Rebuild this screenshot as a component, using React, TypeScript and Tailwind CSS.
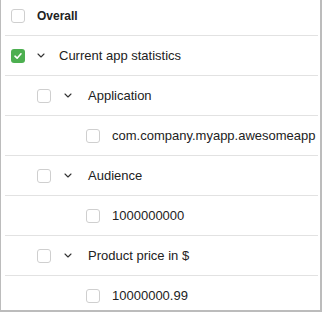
import React from "react";

type Row = { label: string; level: 0 | 1 | 2; checked?: boolean; expandable?: boolean; bold?: boolean };

const rows: Row[] = [
  { label: "Overall", level: 0, bold: true },
  { label: "Current app statistics", level: 0, checked: true, expandable: true },
  { label: "Application", level: 1, expandable: true },
  { label: "com.company.myapp.awesomeapp", level: 2 },
  { label: "Audience", level: 1, expandable: true },
  { label: "1000000000", level: 2 },
  { label: "Product price in $", level: 1, expandable: true },
  { label: "10000000.99", level: 2 },
];

function Checkbox({ checked }: { checked?: boolean }) {
  if (checked) {
    return (
      <span className="flex h-[14px] w-[14px] shrink-0 items-center justify-center rounded-[3px] bg-[#4caf50]">
        <svg width="10" height="10" viewBox="0 0 10 10" fill="none">
          <path d="M2 5.2 L4.1 7.2 L8 2.8" stroke="white" strokeWidth="1.6" strokeLinecap="round" strokeLinejoin="round" />
        </svg>
      </span>
    );
  }
  return <span className="block h-[14px] w-[14px] shrink-0 rounded-[3px] border border-[#cfcfcf] bg-white" />;
}

function Chevron() {
  return (
    <span className="flex h-[12px] w-[12px] shrink-0 items-center justify-center">
      <svg width="8" height="5" viewBox="0 0 8 5" fill="none">
        <path d="M1 1 L4 4 L7 1" stroke="#333" strokeWidth="1.1" strokeLinecap="round" strokeLinejoin="round" />
      </svg>
    </span>
  );
}

export default function App() {
  return (
    <div className="h-[312px] w-[322px] overflow-hidden border-b-2 border-l border-r-2 border-[#bcbcbc] bg-white" style={{ fontFamily: '"Liberation Sans", Arial, sans-serif' }}>
      <div className="-mt-[4px] pl-[4px] pr-[2px]">
        {rows.map((r, i) => (
          <div key={i} className="flex h-[40px] items-center border-b border-[#e2e2e2] text-[13px] text-[#222]">
            {r.level === 0 && (
              <div className="flex items-center pl-[6px]">
                <Checkbox checked={r.checked} />
                {r.expandable ? (
                  <>
                    <span className="ml-[10px]"><Chevron /></span>
                    <span className="ml-[12px]">{r.label}</span>
                  </>
                ) : (
                  <span className={"ml-[12px] " + (r.bold ? "text-[12px] font-bold" : "")}>{r.label}</span>
                )}
              </div>
            )}
            {r.level === 1 && (
              <div className="flex items-center pl-[32px]">
                <Checkbox />
                <span className="ml-[11px]"><Chevron /></span>
                <span className="ml-[14px]">{r.label}</span>
              </div>
            )}
            {r.level === 2 && (
              <div className="flex items-center pl-[81px]">
                <Checkbox />
                <span className="ml-[12px]">{r.label}</span>
              </div>
            )}
          </div>
        ))}
      </div>
    </div>
  );
}
